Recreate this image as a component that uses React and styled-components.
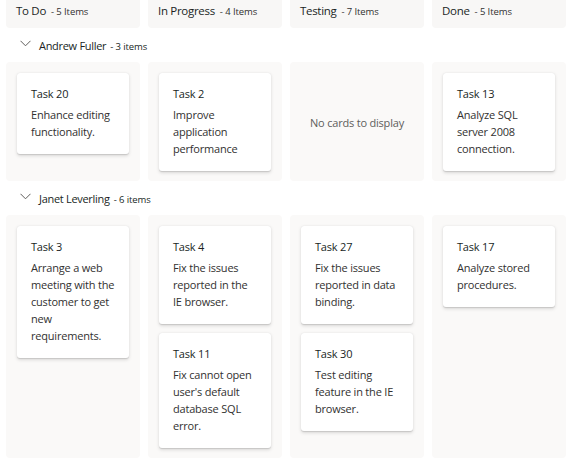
import React from "react";
import styled, { createGlobalStyle } from "styled-components";

const Global = createGlobalStyle`
  html, body { margin: 0; padding: 0; background: #ffffff; }
  body { font-family: "Open Sans", "Noto Sans", sans-serif; color: #201f1e; }
  * { box-sizing: border-box; }
`;

const Board = styled.div`
  padding: 0 11px 8px 6px;
  width: 577px;
`;

const Grid = styled.div`
  display: grid;
  grid-template-columns: repeat(4, 134px);
  column-gap: 8px;
`;

const HeaderCell = styled.div`
  height: 28px;
  background: #f8f7f6;
  border-radius: 0 0 4px 4px;
  padding: 3px 10px 0;
  display: flex;
  align-items: baseline;
  gap: 5px;
  white-space: nowrap;
`;

const HeaderTitle = styled.span`
  font-size: 11.5px;
  letter-spacing: -0.3px;
  line-height: 16px;
  color: #201f1e;
`;

const Count = styled.span`
  font-size: 9.5px;
  letter-spacing: -0.1px;
  color: #323130;
`;

const LaneHeader = styled.div`
  height: 34px;
  display: flex;
  align-items: center;
  padding: 0 0 3px 14px;
  gap: 8px;
  white-space: nowrap;
`;

const LaneName = styled.span`
  font-size: 11px;
  letter-spacing: -0.3px;
  color: #201f1e;
`;

const LaneCount = styled.span`
  font-size: 9.5px;
  letter-spacing: -0.1px;
  color: #201f1e;
  margin-left: 4px;
`;

const Cell = styled.div`
  background: #faf9f8;
  border-radius: 4px;
  padding: 11px 11px 10px;
  display: flex;
  flex-direction: column;
  gap: 9px;
  ${(p) => p.$empty && `align-items: center; justify-content: center;`}
`;

const Empty = styled.div`
  font-size: 11px;
  letter-spacing: -0.2px;
  color: #605e5c;
`;

const Card = styled.div`
  background: #ffffff;
  border-radius: 3px;
  box-shadow: 0 1.6px 3.6px 0 rgba(0, 0, 0, 0.13), 0 0.3px 0.9px 0 rgba(0, 0, 0, 0.11);
  padding: 11px 14px 14px;
`;

const CardTitle = styled.div`
  font-size: 11px;
  letter-spacing: -0.2px;
  line-height: 20px;
  color: #201f1e;
`;

const CardText = styled.div`
  margin-top: 2px;
  font-size: 11px;
  letter-spacing: -0.2px;
  line-height: 17px;
  color: #323130;
  white-space: nowrap;
`;

const Chevron = () => (
  <svg width="11" height="7" viewBox="0 0 11 7" fill="none">
    <path d="M0.5 0.8 L5.5 5.8 L10.5 0.8" stroke="#605e5c" strokeWidth="1" />
  </svg>
);

const columns = [
  { name: "To Do", count: 5 },
  { name: "In Progress", count: 4 },
  { name: "Testing", count: 7 },
  { name: "Done", count: 5 },
];

const lanes = [
  {
    name: "Andrew Fuller",
    count: 3,
    cells: [
      [{ id: 20, lines: ["Enhance editing", "functionality."] }],
      [{ id: 2, lines: ["Improve", "application", "performance"] }],
      [],
      [{ id: 13, lines: ["Analyze SQL", "server 2008", "connection."] }],
    ],
  },
  {
    name: "Janet Leverling",
    count: 6,
    cells: [
      [{ id: 3, lines: ["Arrange a web", "meeting with the", "customer to get", "new", "requirements."] }],
      [
        { id: 4, lines: ["Fix the issues", "reported in the", "IE browser."] },
        { id: 11, lines: ["Fix cannot open", "user's default", "database SQL", "error."] },
      ],
      [
        { id: 27, lines: ["Fix the issues", "reported in data", "binding."] },
        { id: 30, lines: ["Test editing", "feature in the IE", "browser."] },
      ],
      [{ id: 17, lines: ["Analyze stored", "procedures."] }],
    ],
  },
];

export default function App() {
  return (
    <>
      <Global />
      <Board>
        <Grid>
          {columns.map((c) => (
            <HeaderCell key={c.name}>
              <HeaderTitle>{c.name}</HeaderTitle>
              <Count>- {c.count} Items</Count>
            </HeaderCell>
          ))}
        </Grid>
        {lanes.map((lane) => (
          <React.Fragment key={lane.name}>
            <LaneHeader>
              <Chevron />
              <span>
                <LaneName>{lane.name}</LaneName>
                <LaneCount>- {lane.count} items</LaneCount>
              </span>
            </LaneHeader>
            <Grid>
              {lane.cells.map((cards, i) => (
                <Cell key={i} $empty={cards.length === 0}>
                  {cards.length === 0 ? (
                    <Empty>No cards to display</Empty>
                  ) : (
                    cards.map((card) => (
                      <Card key={card.id}>
                        <CardTitle>Task {card.id}</CardTitle>
                        <CardText>
                          {card.lines.map((l, j) => (
                            <React.Fragment key={j}>
                              {l}
                              {j < card.lines.length - 1 && <br />}
                            </React.Fragment>
                          ))}
                        </CardText>
                      </Card>
                    ))
                  )}
                </Cell>
              ))}
            </Grid>
          </React.Fragment>
        ))}
      </Board>
    </>
  );
}
